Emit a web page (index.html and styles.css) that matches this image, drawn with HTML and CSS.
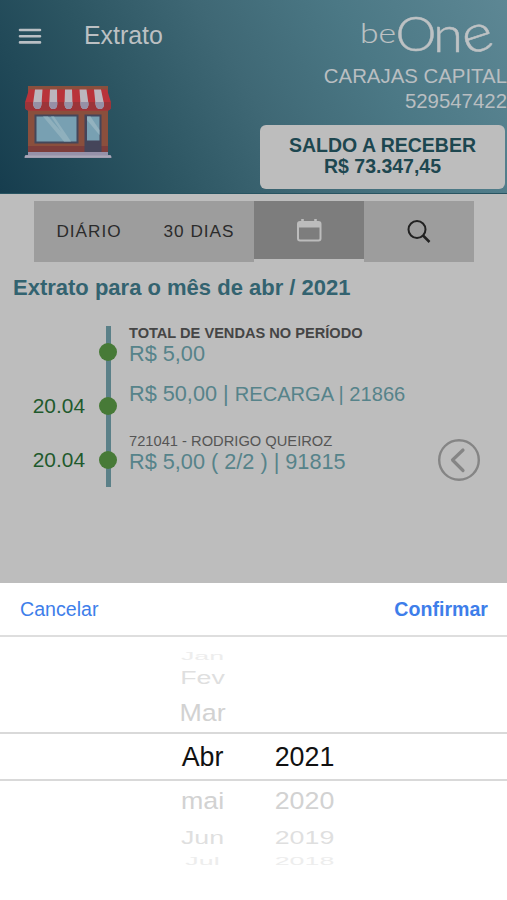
FILE: index.html
```html
<!DOCTYPE html>
<html lang="pt-BR">
<head>
    <meta charset="UTF-8">
    <meta name="viewport" content="width=device-width, initial-scale=1.0">
    <title>Extrato</title>
    <link rel="stylesheet" href="styles.css">
</head>
<body>
    <header class="topo">
        <div class="topo-esquerda">
            <div class="barra">
                <svg class="menu" width="24" height="18" viewBox="0 0 24 18">
                    <path d="M2 3h20M2 9.2h20M2 15.4h20" stroke="#b9bfc4" stroke-width="2.6" stroke-linecap="round"/>
                </svg>
                <h1>Extrato</h1>
            </div>
            <svg class="loja" width="88" height="74" viewBox="0 0 88 74">
                <rect x="4" y="1" width="80" height="67" fill="#8a4f3d"/>
                <rect x="4" y="61" width="80" height="6" fill="#7c3d3b"/>
                <path d="M5 4.500h78l4 13v4q0 4-4 4H5q-4 0-4-4v-4z" fill="#b9333a"/>
                <path d="M1 17h86v4.500q0 4-4 4H5q-4 0-4-4z" fill="#9c3439"/>
                <path d="M11 4.500h7.500l-1 14.500q-.3 5-4 5t-4.500-5zM26 4.500h7l.2 14.500q0 5-4 5t-4-5zM41 4.500h7l.5 14.500q0 5-4 5t-4-5zM55.500 4.500h7l2 14.500q0 5-4 5t-4-5zM70 4.500h7l3 14.500q0 5-4 5t-4.500-5z" fill="#bbb6be"/>
                <path d="M9.300 17h8.400l-.2 2q-.3 5-4 5t-4.500-5zM25.300 17h8v2q0 5-4 5t-4-5zM40.500 17h8v2q0 5-4 5t-4-5zM56.300 17h8l.2 2q0 5-4 5t-4-5zM71.300 17h8.400l.3 2q0 5-4 5t-4.500-5z" fill="#9690a6"/>
                <rect x="10.500" y="29.500" width="44" height="29" fill="#44475a"/>
                <rect x="12.500" y="31.500" width="40" height="25" fill="#78a0b2"/>
                <path d="M19 31.500h5l22 25h-6zM27 31.500h3l17 25h-3z" fill="#8fb0bd"/>
                <rect x="60.500" y="29.500" width="17" height="38" fill="#45455a"/>
                <rect x="63" y="31.500" width="12.500" height="24" fill="#78a0b2"/>
                <path d="M63 35l12.500 15v-5l-9-13.500h-3.500z" fill="#93b2bf"/>
                <path d="M4 67h80v3h2q2 1 1.500 3H.5q-.5-2 1.500-3h2z" fill="#9691a9"/>
                <path d="M1 71.500h86" stroke="#aaa8b8" stroke-width="2"/>
            </svg>
        </div>
        <div class="topo-direita">
            <svg class="logo" width="136" height="46" viewBox="0 0 136 46">
                <text x="1" y="32.500" font-size="28" textLength="36" lengthAdjust="spacingAndGlyphs" stroke-width="0.2">be</text>
                <text x="36.500" y="41" font-size="48" textLength="41" lengthAdjust="spacingAndGlyphs">O</text>
                <text x="74" y="41.500" font-size="50" textLength="30" lengthAdjust="spacingAndGlyphs">n</text>
                <text x="103" y="41.500" font-size="52" textLength="31" lengthAdjust="spacingAndGlyphs" transform="rotate(-18 118 28)">e</text>
            </svg>
            <p class="empresa">CARAJAS CAPITAL</p>
            <p class="empresa">529547422</p>
            <div class="saldo">
                <span>SALDO A RECEBER</span>
                <span>R$ 73.347,45</span>
            </div>
        </div>
    </header>

    <main>
        <nav class="filtros">
            <button class="filtro">DIÁRIO</button>
            <button class="filtro">30 DIAS</button>
            <button class="filtro ativo">
                <svg width="26" height="24" viewBox="0 0 26 24">
                    <rect x="2" y="4" width="22.500" height="18.500" rx="2" fill="none" stroke="#bcbcbc" stroke-width="2"/>
                    <path d="M2 4h22.500v5.500H2z" fill="#bcbcbc"/>
                    <path d="M6.500 1v4M19.500 1v4" stroke="#bcbcbc" stroke-width="2.600"/>
                </svg>
            </button>
            <button class="filtro">
                <svg width="26" height="26" viewBox="0 0 26 26">
                    <circle cx="11" cy="10.500" r="8.500" fill="none" stroke="#222" stroke-width="2"/>
                    <path d="M17 16.500l6.500 6.500" stroke="#222" stroke-width="2.500"/>
                </svg>
            </button>
        </nav>

        <h2>Extrato para o mês de abr / 2021</h2>

        <section class="extrato">
            <div class="datas">
                <span></span>
                <span>20.04</span>
                <span>20.04</span>
            </div>
            <div class="linha">
                <i></i>
                <i></i>
                <i></i>
            </div>
            <div class="itens">
                <div class="item">
                    <p class="titulo">TOTAL DE VENDAS NO PERÍODO</p>
                    <p class="valor">R$ 5,00</p>
                </div>
                <div class="item">
                    <p class="valor">R$ 50,00 | <small>RECARGA | 21866</small></p>
                </div>
                <div class="item">
                    <p class="nome">721041 - RODRIGO QUEIROZ</p>
                    <p class="valor">R$ 5,00 ( 2/2 ) | 91815</p>
                </div>
            </div>
            <svg class="voltar" width="44" height="44" viewBox="0 0 44 44">
                <circle cx="22" cy="22" r="19.800" fill="none" stroke="#858585" stroke-width="2.400"/>
                <path d="M26 12L15.500 22L26 32.500" fill="none" stroke="#858585" stroke-width="3.200" stroke-linecap="round" stroke-linejoin="round"/>
            </svg>
        </section>
    </main>

    <section class="seletor">
        <div class="acoes">
            <button class="cancelar">Cancelar</button>
            <button class="confirmar">Confirmar</button>
        </div>
        <div class="roda">
            <div class="opcao longe"><span>Jan</span><span></span></div>
            <div class="opcao media"><span>Fev</span><span></span></div>
            <div class="opcao perto"><span>Mar</span><span></span></div>
            <div class="opcao atual"><span>Abr</span><span>2021</span></div>
            <div class="opcao perto"><span>mai</span><span>2020</span></div>
            <div class="opcao media"><span>Jun</span><span>2019</span></div>
            <div class="opcao longe"><span>Jul</span><span>2018</span></div>
        </div>
    </section>
</body>
</html>
```

FILE: styles.css
```css
* {
    box-sizing: border-box;
    margin: 0;
    padding: 0;
}
body {
    width: 507px;
    height: 900px;
    overflow: hidden;
    display: flex;
    flex-direction: column;
    font-family: "Liberation Sans", Arial, sans-serif;
    background: #bdbdbd;
}
button {
    font-family: inherit;
    border: none;
    background: none;
    cursor: pointer;
}
svg {
    display: block;
}
.topo {
    height: 194px;
    flex: none;
    display: flex;
    justify-content: space-between;
    background: linear-gradient(60deg, #163d4e 0%, #2c5562 28%, #3f6875 50%, #4b7885 72%, #5d8794 100%);
    border-bottom: 1px solid #285461;
}
.barra {
    display: flex;
    align-items: center;
    gap: 42px;
    height: 72px;
    padding-left: 18px;
}
h1 {
    font-size: 24.9px;
    line-height: 28px;
    padding-bottom: 2px;
    font-weight: normal;
    color: #bcc0c3;
}
.loja {
    margin: 13px 0 0 24px;
}
.topo-direita {
    display: flex;
    flex-direction: column;
    align-items: flex-end;
}
.logo {
    margin: 10px 12px 8px 0;
    overflow: visible;
    font-family: Lato, sans-serif;
    font-weight: 300;
    fill: #bec2c4;
    stroke: #bec2c4;
    stroke-width: 0.5px;
}
.logo text:first-child {
    stroke-width: 0.2px;
}
.empresa {
    font-size: 20.4px;
    line-height: 25px;
    color: #b9bec1;
}
.saldo {
    width: 245px;
    height: 64px;
    margin: 11px 2px 0 0;
    padding-top: 10px;
    border-radius: 6px;
    background: #bdbdbd;
    color: #1d4750;
    font-size: 19.5px;
    font-weight: bold;
    line-height: 21px;
    text-align: center;
}
.saldo span {
    display: block;
}
.filtros {
    display: grid;
    grid-template-columns: repeat(4, 110px);
    width: 440px;
    height: 61px;
    margin: 7px 0 0 34px;
}
.filtro {
    display: flex;
    align-items: center;
    justify-content: center;
    background: #9d9d9d;
    color: #2b2b2b;
    font-size: 17.2px;
    letter-spacing: 1px;
}
.filtro.ativo {
    height: 58px;
    background: #7d7d7d;
}
h2 {
    margin: 13px 0 0 13px;
    font-size: 22px;
    line-height: 26px;
    color: #336370;
}
.extrato {
    display: flex;
    margin-top: 25px;
    height: 161px;
}
.datas {
    width: 85px;
    text-align: right;
    font-size: 20.9px;
    color: #1f5a2d;
}
.datas span {
    display: block;
    height: 54px;
    line-height: 52px;
}
.linha {
    width: 5px;
    margin-left: 21px;
    padding-top: 17px;
    background: #5b8088;
    display: flex;
    flex-direction: column;
    align-items: center;
    gap: 36px;
}
.linha i {
    flex: none;
    width: 18px;
    height: 18px;
    margin-left: -1px;
    border-radius: 50%;
    background: #477a37;
}
.itens {
    width: 300px;
    margin: -1px 0 0 18px;
}
.item {
    height: 54px;
}
.item:nth-child(2) {
    padding-top: 2px;
}
.titulo {
    font-size: 14.6px;
    font-weight: bold;
    line-height: 16px;
    color: #454545;
}
.nome {
    font-size: 14.7px;
    line-height: 16px;
    color: #555;
}
.valor {
    font-size: 21.7px;
    line-height: 25px;
    color: #56838a;
}
.valor small {
    font-size: 20.1px;
}
.voltar {
    margin: 112px 0 0 8px;
}
.seletor {
    height: 317px;
    flex: none;
    margin-top: auto;
    background: #fff;
}
.acoes {
    display: flex;
    justify-content: space-between;
    height: 54px;
    padding: 0 19px 0 20px;
    border-bottom: 2px solid #dedede;
}
.acoes button {
    font-size: 19.6px;
    color: #3e7eea;
}
.acoes .confirmar {
    font-weight: bold;
}
.roda {
    padding-top: 13px;
    font-size: 26.8px;
    line-height: 31px;
}
.opcao {
    display: grid;
    grid-template-columns: 80px 80px;
    justify-content: center;
    align-content: center;
    column-gap: 22px;
    text-align: center;
    color: #d2d2d2;
}
.opcao span {
    height: 31px;
}
.perto {
    height: 37px;
}
.perto span {
    transform: scaleY(0.9);
}
.media {
    height: 33px;
    color: #dfdfdf;
}
.media span {
    transform: scaleY(0.68);
}
.longe {
    height: 12px;
    color: #ededed;
}
.longe span {
    transform: scaleY(0.4);
}
.atual {
    height: 49px;
    padding-top: 1px;
    border-top: 2px solid #d9d9d9;
    border-bottom: 2px solid #d9d9d9;
    color: #111;
}
.atual + .perto {
    height: 41px;
}
```
